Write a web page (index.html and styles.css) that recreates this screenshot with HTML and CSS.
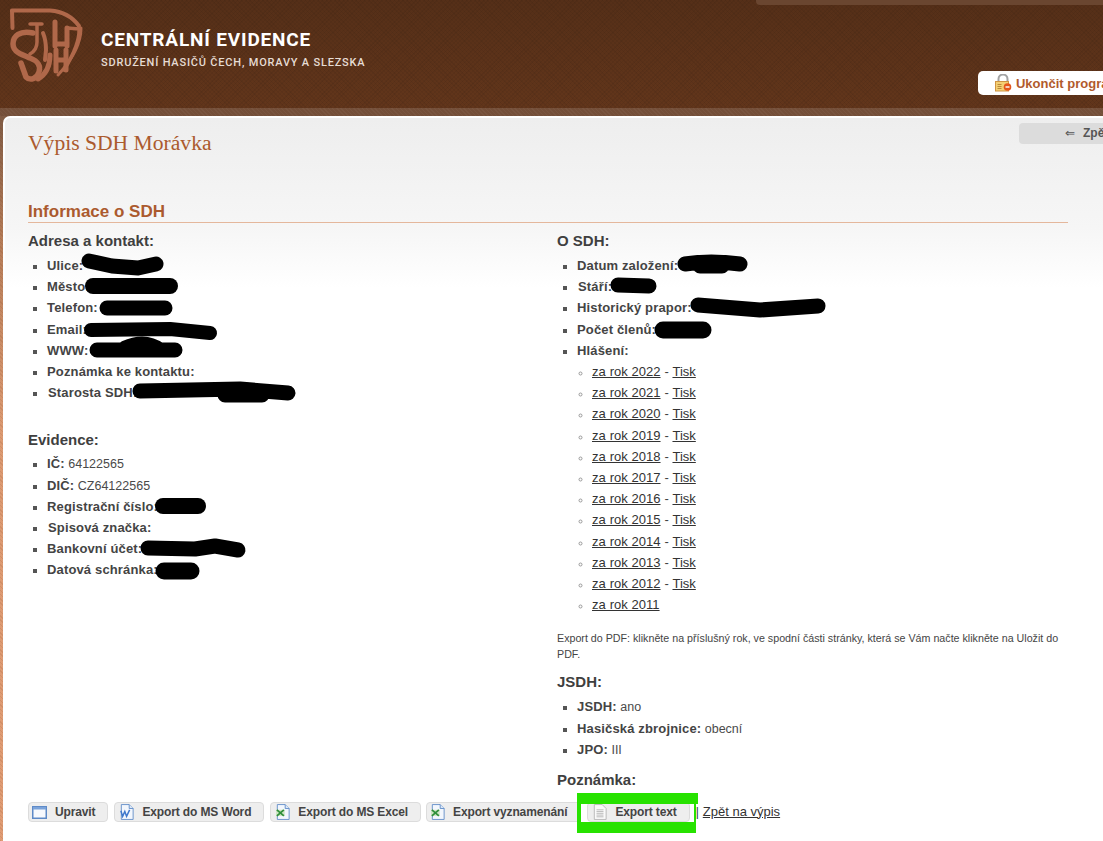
FILE: index.html
```html
<!DOCTYPE html>
<html lang="cs">
<head>
<meta charset="utf-8">
<title>Centrální evidence</title>
<link rel="stylesheet" href="styles.css">
</head>
<body>
<div class="page">
  <header class="header">
    <div class="topstrip"></div>
    <div class="brandrow">
      <svg class="logo" width="95" height="95" viewBox="0 0 95 95" fill="none" stroke="#b0684a" stroke-linecap="round" stroke-linejoin="round">
        <path stroke-width="4" d="M12.5 28 L12 10.5 L50 10.5 Q69 12 79 26"/>
        <path stroke-width="3" d="M81 28 Q81 50 58 75"/>
        <path stroke-width="5.5" d="M33 33 C20 30 13 36 13 44 C13 52 22 55 30 58 C38 61 41 66 39 72 C37 79 30 81 26 77 L21 63"/>
        <path stroke-width="3.5" d="M30 24 H42 M37 24 V42 Q37 50 30 54"/>
        <path stroke-width="4" d="M43 33 Q46 40 46 50 L45 60"/>
        <path stroke-width="5" d="M55 22 V46 M67 28 V46 M55 44 H67"/>
        <path stroke-width="3.5" d="M67 28 L79 29 Q80 44 64 70"/>
        <path stroke-width="5" d="M50 55 Q50 72 38 79 M56 50 V71 M66 50 V70 M56 60 H66"/>
      </svg>
      <div class="brand">
        <div class="brand-title">CENTRÁLNÍ EVIDENCE</div>
        <div class="brand-sub">SDRUŽENÍ HASIČŮ ČECH, MORAVY A SLEZSKA</div>
      </div>
      <a class="logout" href="#">
        <svg class="logout-icon" width="18" height="18" viewBox="0 0 18 18">
          <path d="M4.5 8 V5 a4.5 4.5 0 0 1 9 0 V8" fill="none" stroke="#a3a3a3" stroke-width="2"/>
          <rect x="1.5" y="7.5" width="13" height="9.5" fill="#f4cf73" stroke="#cf9442"/>
          <path d="M3.5 10.5 h4 M3.5 12.5 h4 M3.5 14.5 h4" stroke="#b98a3a"/>
          <circle cx="13.5" cy="13" r="3.8" fill="#e5561c"/>
          <path d="M11.5 13 h4" stroke="#fff" stroke-width="1.4"/>
        </svg>
        Ukončit program
      </a>
    </div>
    <div class="band"></div>
  </header>

  <main class="card">
    <div class="titlerow">
      <h1 class="title">Výpis SDH Morávka</h1>
      <a class="back" href="#"><span class="back-arrow">⇐</span>Zpět na výpis</a>
    </div>

    <h2 class="section">Informace o SDH</h2>

    <div class="columns">
      <div class="col-left">
        <h3 class="sub">Adresa a kontakt:</h3>
        <ul class="info">
          <li><b>Ulice:</b></li>
          <li><b>Město:</b></li>
          <li><b>Telefon:</b></li>
          <li><b>Email:</b></li>
          <li><b>WWW:</b></li>
          <li><b>Poznámka ke kontaktu:</b></li>
          <li><b class="nudge">Starosta SDH:</b></li>
        </ul>
        <h3 class="sub sub-evidence">Evidence:</h3>
        <ul class="info info-tight">
          <li><b>IČ:</b> 64122565</li>
          <li><b>DIČ:</b> CZ64122565</li>
          <li><b>Registrační číslo:</b></li>
          <li><b class="nudge">Spisová značka:</b></li>
          <li><b>Bankovní účet:</b></li>
          <li><b>Datová schránka:</b></li>
        </ul>
      </div>
      <div class="col-right">
        <h3 class="sub">O SDH:</h3>
        <ul class="info">
          <li><b>Datum založení:</b></li>
          <li><b class="nudge">Stáří:</b></li>
          <li><b>Historický prapor:</b></li>
          <li><b>Počet členů:</b></li>
          <li><b>Hlášení:</b>
            <ul class="years">
              <li><a href="#">za rok 2022</a> - <a href="#">Tisk</a></li>
              <li><a href="#">za rok 2021</a> - <a href="#">Tisk</a></li>
              <li><a href="#">za rok 2020</a> - <a href="#">Tisk</a></li>
              <li><a href="#">za rok 2019</a> - <a href="#">Tisk</a></li>
              <li><a href="#">za rok 2018</a> - <a href="#">Tisk</a></li>
              <li><a href="#">za rok 2017</a> - <a href="#">Tisk</a></li>
              <li><a href="#">za rok 2016</a> - <a href="#">Tisk</a></li>
              <li><a href="#">za rok 2015</a> - <a href="#">Tisk</a></li>
              <li><a href="#">za rok 2014</a> - <a href="#">Tisk</a></li>
              <li><a href="#">za rok 2013</a> - <a href="#">Tisk</a></li>
              <li><a href="#">za rok 2012</a> - <a href="#">Tisk</a></li>
              <li><a href="#">za rok 2011</a></li>
            </ul>
          </li>
        </ul>
        <p class="note">Export do PDF: klikněte na příslušný rok, ve spodní části stránky, která se Vám načte klikněte na Uložit do PDF.</p>
        <h3 class="sub sub-jsdh">JSDH:</h3>
        <ul class="info">
          <li><b>JSDH:</b> ano</li>
          <li><b>Hasičská zbrojnice:</b> obecní</li>
          <li><b>JPO:</b> III</li>
        </ul>
        <h3 class="sub sub-note">Poznámka:</h3>
      </div>
    </div>

    <div class="actions">
      <a class="btn btn-window" href="#">
        <svg width="15" height="13" viewBox="0 0 15 13"><rect x=".75" y=".75" width="13.5" height="11.5" fill="#f7f9fd" stroke="#5e8ac7" stroke-width="1.5"/><rect x="1" y="1" width="13" height="2.5" fill="#7ba3da"/></svg>
        <span class="btn-label">Upravit</span>
      </a>
      <a class="btn" href="#">
        <svg width="14" height="16" viewBox="0 0 16 18"><path d="M1.5 .5 H10.5 L15 5 V17.5 H1.5 Z" fill="#f3f7fd" stroke="#5e8ac7"/><path d="M10.5 .5 V5 H15" fill="#dbe7f7" stroke="#5e8ac7"/><path d="M1 7.5 L3 14 L5.5 8.5 L7.5 14 L11 6.5" fill="none" stroke="#3f78cc" stroke-width="1.7"/></svg>
        <span class="btn-label">Export do MS Word</span>
      </a>
      <a class="btn" href="#">
        <svg width="14" height="16" viewBox="0 0 16 18"><path d="M1.5 .5 H10.5 L15 5 V17.5 H1.5 Z" fill="#f3f7fd" stroke="#5e8ac7"/><path d="M10.5 .5 V5 H15" fill="#dbe7f7" stroke="#5e8ac7"/><path d="M0 6.5 H10 V13.5 H0 Z" fill="#cfe5c4"/><path d="M1 6.5 L9 13.5 M9 6.5 L1 13.5" stroke="#2f8f3a" stroke-width="2"/></svg>
        <span class="btn-label">Export do MS Excel</span>
      </a>
      <a class="btn btn-tight" href="#">
        <svg width="14" height="16" viewBox="0 0 16 18"><path d="M1.5 .5 H10.5 L15 5 V17.5 H1.5 Z" fill="#f3f7fd" stroke="#5e8ac7"/><path d="M10.5 .5 V5 H15" fill="#dbe7f7" stroke="#5e8ac7"/><path d="M0 6.5 H10 V13.5 H0 Z" fill="#cfe5c4"/><path d="M1 6.5 L9 13.5 M9 6.5 L1 13.5" stroke="#2f8f3a" stroke-width="2"/></svg>
        <span class="btn-label">Export vyznamenání</span>
      </a>
      <a class="btn btn-marked" href="#">
        <svg width="14" height="16" viewBox="0 0 16 18"><path d="M1.5 .5 H10.5 L15 5 V17.5 H1.5 Z" fill="#fafafa" stroke="#b4b4b4"/><path d="M4 6.5 H12 M4 8.5 H12 M4 10.5 H12 M4 12.5 H12 M4 14.5 H12" stroke="#b4b4b4"/></svg>
        <span class="btn-label">Export text</span>
        <span class="marker"></span>
      </a>
      <span class="sep">|</span>
      <a class="backlink" href="#">Zpět na výpis</a>
    </div>
  </main>

  <svg class="redactions" width="1103" height="841" viewBox="0 0 1103 841" fill="none" stroke="#000" stroke-linecap="round" stroke-linejoin="round">
    <path stroke-width="15" d="M89 261 L112 266 L138 268 L156 264"/>
    <path stroke-width="16" d="M93 286 L170 286"/>
    <path stroke-width="15" d="M107 308 L165 308"/>
    <path stroke-width="14" d="M91 330 L170 329 L210 333"/>
    <path stroke-width="15" d="M97 350 L175 350 M125 348 Q145 339 160 350"/>
    <path stroke-width="15" d="M140 391 L240 389 L288 393 M225 395 L262 395"/>
    <path stroke-width="16" d="M163 506 L198 506"/>
    <path stroke-width="15" d="M148 548 L195 549 L215 546 L238 550"/>
    <path stroke-width="17" d="M164 571 L191 571"/>
    <path stroke-width="15" d="M685 264 Q710 260 740 264 M700 266 L722 266"/>
    <path stroke-width="15" d="M618 285 L649 286"/>
    <path stroke-width="15" d="M698 305 L760 310 L818 306"/>
    <path stroke-width="17" d="M663 330 L703 330"/>
  </svg>
</div>
</body>
</html>
```

FILE: styles.css
```css
* { box-sizing: border-box; }

html, body {
  margin: 0;
  padding: 0;
  height: 100%;
}

body {
  font-family: "Liberation Sans", Arial, sans-serif;
  font-size: 13px;
  color: #444;
  overflow: hidden;
}

.page {
  position: relative;
  width: 1103px;
  height: 841px;
  overflow: hidden;
  background-image:
    repeating-linear-gradient(45deg, rgba(120,60,20,.12) 0 1px, transparent 1px 3px),
    linear-gradient(#7d5a44 110px, #b57c58 240px, #dc9a72 430px, #e09c74);
  display: flex;
  flex-direction: column;
}

/* header */
.header {
  display: flex;
  flex-direction: column;
  height: 116px;
  flex-shrink: 0;
  background-color: #5a3119;
  background-image:
    repeating-linear-gradient(45deg, rgba(0,0,0,.05) 0 1px, transparent 1px 3px),
    repeating-linear-gradient(-45deg, rgba(0,0,0,.05) 0 1px, transparent 1px 3px),
    linear-gradient(#552f18, #63361b);
}

.topstrip {
  height: 5px;
  width: 347px;
  align-self: flex-end;
  background: #6a4630;
  border-bottom-left-radius: 4px;
  flex-shrink: 0;
}

.brandrow {
  display: flex;
  align-items: flex-start;
  height: 108px;
  margin-top: -5px;
}

.logo { flex-shrink: 0; display: block; }

.brand {
  margin: 29px 0 0 6px;
  white-space: nowrap;
}

.brand-title {
  font-family: Roboto, "Liberation Sans", sans-serif;
  font-weight: 700;
  font-size: 19px;
  line-height: 22px;
  letter-spacing: .83px;
  color: #fff;
}

.brand-sub {
  font-family: Roboto, "Liberation Sans", sans-serif;
  font-weight: 500;
  font-size: 11px;
  line-height: 14px;
  margin-top: 5px;
  letter-spacing: .8px;
  color: #e6dcd4;
}

.logout {
  display: flex;
  align-items: center;
  flex-shrink: 0;
  margin: 71px -33px 0 auto;
  height: 24px;
  padding: 0 16px;
  background: #fff;
  border-radius: 5px;
  font-weight: 700;
  font-size: 13px;
  color: #b15a2c;
  text-decoration: none;
  white-space: nowrap;
}

.logout-icon { margin-right: 4px; flex-shrink: 0; }

.band {
  height: 8px;
  flex-shrink: 0;
  background-color: #744f39;
  background-image:
    repeating-linear-gradient(45deg, rgba(255,255,255,.035) 0 1px, transparent 1px 3px);
}

/* card */
.card {
  flex: 1;
  margin-left: 3px;
  padding: 0 35px 0 23px;
  border-top: 2px solid #fff;
  border-left: 2px solid #fff;
  border-top-left-radius: 7px;
  background: linear-gradient(#eeeeee, #f6f6f6 110px, #fff 170px);
  display: flex;
  flex-direction: column;
}

.titlerow {
  display: flex;
  align-items: flex-start;
  justify-content: space-between;
  height: 83px;
  margin-right: -35px;
}

.title {
  margin: 12px 0 0;
  font-family: "Liberation Serif", "Times New Roman", serif;
  font-weight: 400;
  font-size: 21.6px;
  line-height: 26px;
  color: #ab5a2e;
}

.back {
  margin: 5px -76px 0 0;
  width: 160px;
  height: 21px;
  flex-shrink: 0;
  padding-left: 46px;
  background: #dcdcdc;
  border-radius: 4px;
  font-weight: 700;
  font-size: 12px;
  line-height: 21px;
  color: #555;
  text-decoration: none;
  white-space: nowrap;
}

.back-arrow {
  font-weight: 400;
  margin-right: 8px;
}

.section {
  margin: 0;
  padding: 1px 0 0;
  border-bottom: 1px solid #e4b79c;
  font-size: 17px;
  line-height: 20px;
  font-weight: 700;
  color: #ab5a2e;
}

.columns {
  display: grid;
  grid-template-columns: 529px 511px;
  height: 579px;
}

.sub {
  margin: 0;
  font-size: 15px;
  line-height: 20px;
  font-weight: 700;
  color: #3f3f3f;
}

.col-left .sub, .col-right .sub { padding-top: 8px; }

.sub-evidence { margin-top: 18px; }
.sub-jsdh { margin-top: 2px; }
.sub-note { margin-top: 1px; }

.info {
  margin: 5px 0 0;
  padding: 0 0 0 19px;
  list-style: square;
}

.info-tight { margin-top: 4px; }

.col-right .info { padding-left: 20px; }

.info > li {
  line-height: 21.2px;
  color: #4a4a4a;
  font-size: 12.5px;
}

.info > li > b {
  font-size: 13px;
  line-height: 1;
  letter-spacing: .15px;
  color: #444;
}

.info > li::marker { color: #555; font-size: 12px; }

.nudge { margin-left: 1px; }

.years {
  margin: -1px 0 0;
  padding: 0 0 0 15px;
  list-style: circle;
}

.years > li {
  line-height: 21.2px;
  font-size: 13px;
  word-spacing: .3px;
  color: #444;
}

.years > li::marker { color: #999; font-size: 11px; }

.years a { color: #333; }

.note {
  margin: 15px 0 0;
  font-size: 10.7px;
  line-height: 16px;
  color: #444;
}

/* action row */
.actions {
  display: flex;
  align-items: center;
  gap: 6px;
  height: 20px;
}

.btn {
  position: relative;
  display: flex;
  align-items: center;
  height: 20px;
  padding: 0 12px 0 5px;
  background: #eee;
  border: 1px solid #dcdcdc;
  border-radius: 4px;
  font-weight: 700;
  font-size: 12px;
  letter-spacing: -.13px;
  color: #444;
  text-decoration: none;
  white-space: nowrap;
}

.btn-window { padding: 0 12px 0 3px; }
.btn-tight { padding: 0 13px 0 4px; margin-left: -1px; }

.btn svg { flex-shrink: 0; }
.btn-label { margin-left: 8px; }

.marker {
  position: absolute;
  left: -11px;
  right: -7px;
  top: -10px;
  bottom: -12px;
  border: solid #27e200;
  border-width: 11px 2px 11px 4px;
  pointer-events: none;
}

.marker::after {
  content: "";
  position: absolute;
  left: 100%;
  top: -11px;
  width: 4px;
  height: 11px;
  background: #27e200;
}

.sep {
  margin-right: -2px;
  font-size: 12px;
  color: #333;
}

.backlink {
  margin-bottom: 2px;
  font-size: 13px;
  color: #333;
}

.redactions {
  position: absolute;
  left: 0;
  top: 0;
  pointer-events: none;
}
```
